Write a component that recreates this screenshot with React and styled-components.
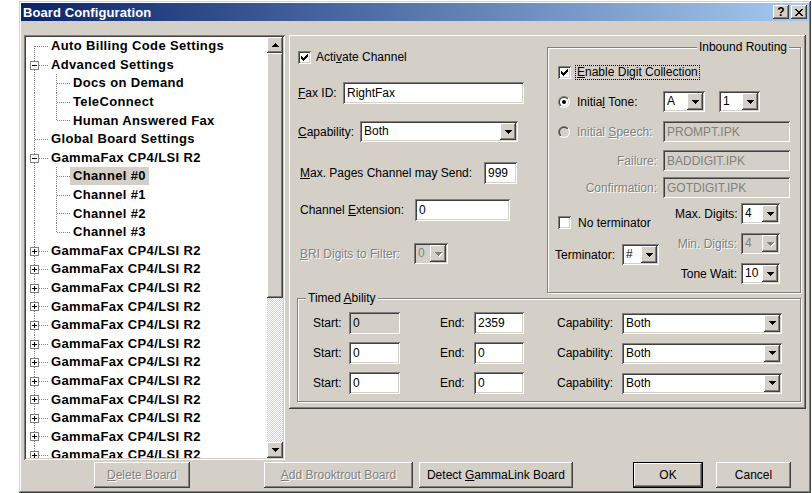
import React from "react";
import styled, { createGlobalStyle, css } from "styled-components";

const GlobalStyle = createGlobalStyle`
  body {
    margin: 0;
    background: #fff;
    font-family: "Liberation Sans", Arial, sans-serif;
    font-size: 12px;
    color: #000;
  }
`;

const sunken = css`
  box-shadow: inset 1px 1px #808080, inset -1px -1px #fff,
    inset 2px 2px #404040, inset -2px -2px #d4d0c8;
`;

const raised = css`
  box-shadow: inset -1px -1px #404040, inset 1px 1px #fff,
    inset -2px -2px #808080, inset 2px 2px #d4d0c8;
`;

const disabledText = css`
  color: #808080;
  text-shadow: 1px 1px 0 #fff;
`;

const TREE = [
  { label: "Auto Billing Code Settings", level: 0, first: true },
  { label: "Advanced Settings", level: 0, box: "minus" },
  { label: "Docs on Demand", level: 1 },
  { label: "TeleConnect", level: 1 },
  { label: "Human Answered Fax", level: 1, last: true },
  { label: "Global Board Settings", level: 0 },
  { label: "GammaFax CP4/LSI R2", level: 0, box: "minus" },
  { label: "Channel #0", level: 1, selected: true },
  { label: "Channel #1", level: 1 },
  { label: "Channel #2", level: 1 },
  { label: "Channel #3", level: 1, last: true },
  ...Array.from({ length: 12 }, () => ({
    label: "GammaFax CP4/LSI R2",
    level: 0,
    box: "plus",
  })),
];

function App() {
  return (
    <>
      <GlobalStyle />
      <Window>
        <TitleBar>
          <Title>Board Configuration</Title>
          <CaptionButtons>
            <CaptionButton>?</CaptionButton>
            <CaptionButton>
              <svg width="8" height="7" viewBox="0 0 8 7" shapeRendering="crispEdges">
                <path
                  d="M0 0h2v1h1v1h2v-1h1v-1h2v1h-1v1h-1v1h-1v1h1v1h1v1h1v1h-2v-1h-1v-1h-2v1h-1v1h-2v-1h1v-1h1v-1h1v-1h-1v-1h-1v-1h-1z"
                  fill="#000"
                />
              </svg>
            </CaptionButton>
          </CaptionButtons>
        </TitleBar>

        <Body>
          <MainRow>
            <TreeBox>
              <TreeList>
                {TREE.map((item, i) => (
                  <TreeRow key={i}>
                    {item.level > 0 && <Guide />}
                    <Joint $last={item.last} $first={item.first}>
                      {item.box && <Expander type={item.box} />}
                    </Joint>
                    <ItemLabel $selected={item.selected}>{item.label}</ItemLabel>
                  </TreeRow>
                ))}
              </TreeList>
              <ScrollBar>
                <ScrollButton>
                  <Arrow up />
                </ScrollButton>
                <Thumb />
                <Track />
                <ScrollButton>
                  <Arrow />
                </ScrollButton>
              </ScrollBar>
            </TreeBox>

            <Panel>
              <TopArea>
                <MainColumn>
                  <Row $mt={11} $h={14}>
                    <CheckBox checked />
                    <Label $ml={5}>
                      Acti<u>v</u>ate Channel
                    </Label>
                  </Row>
                  <Row $mt={18}>
                    <Label $w={45}>
                      <u>F</u>ax ID:
                    </Label>
                    <TextBox $w={181}>RightFax</TextBox>
                  </Row>
                  <Row $mt={17}>
                    <Label $w={62}>
                      <u>C</u>apability:
                    </Label>
                    <Select $w={158} value="Both" />
                  </Row>
                  <Row $mt={20}>
                    <Label $w={184} $ml={2}>
                      <u>M</u>ax. Pages Channel may Send:
                    </Label>
                    <TextBox $w={33}>999</TextBox>
                  </Row>
                  <Row $mt={15}>
                    <Label $w={115} $ml={2}>
                      Channel <u>E</u>xtension:
                    </Label>
                    <TextBox $w={95}>0</TextBox>
                  </Row>
                  <Row $mt={22}>
                    <Label $w={114} $ml={2} $disabled>
                      <u>B</u>RI Digits to Filter:
                    </Label>
                    <Select $w={34} value="0" disabled />
                  </Row>
                </MainColumn>

                <Group $h={246} $mt={8}>
                  <Legend $right>Inbound Routing</Legend>
                  <GroupBody $pt={17} $pl={10}>
                    <Row $h={14}>
                      <CheckBox checked />
                      <FocusText>
                        <u>E</u>nable Digit Collection
                      </FocusText>
                    </Row>
                    <Row $mt={12}>
                      <Lead>
                        <Radio checked id="tone" />
                        <Label $ml={7}>
                          Initia<u>l</u> Tone:
                        </Label>
                      </Lead>
                      <Select $w={42} value="A" />
                      <Select $w={41} $ml={14} value="1" />
                    </Row>
                    <Row $mt={9}>
                      <Lead>
                        <Radio disabled id="speech" />
                        <Label $ml={7} $disabled>
                          Initial <u>S</u>peech:
                        </Label>
                      </Lead>
                      <TextBox $w={127} $h={21} disabled>
                        PROMPT.IPK
                      </TextBox>
                    </Row>
                    <Row $mt={8}>
                      <Lead $right>
                        <Label $disabled>Failure:</Label>
                      </Lead>
                      <TextBox $w={127} $h={21} disabled>
                        BADDIGIT.IPK
                      </TextBox>
                    </Row>
                    <Row $mt={6}>
                      <Lead $right>
                        <Label $disabled>Confirmation:</Label>
                      </Lead>
                      <TextBox $w={127} $h={21} disabled>
                        GOTDIGIT.IPK
                      </TextBox>
                    </Row>
                    <DigitGrid>
                      <Stack>
                        <Row $mt={13} $h={13}>
                          <CheckBox />
                          <Label $ml={7}>No terminator</Label>
                        </Row>
                        <Row $mt={15}>
                          <Label $w={67} $ml={-3}>
                            Terminator:
                          </Label>
                          <Select $w={37} value="#" />
                        </Row>
                      </Stack>
                      <Stack>
                        <Row>
                          <Label $w={62} $right>
                            Max. Digits:
                          </Label>
                          <Select $w={39} $ml={4} value="4" />
                        </Row>
                        <Row $mt={9}>
                          <Label $w={62} $right $disabled>
                            Min. Digits:
                          </Label>
                          <Select $w={39} $ml={4} value="4" disabled />
                        </Row>
                        <Row $mt={9}>
                          <Label $w={62} $right>
                            Tone Wait:
                          </Label>
                          <Select $w={39} $ml={4} value="10" />
                        </Row>
                      </Stack>
                    </DigitGrid>
                  </GroupBody>
                </Group>
              </TopArea>

              <Group $h={104} $mt={5}>
                <Legend>
                  Timed <u>A</u>bility
                </Legend>
                <TimedGrid>
                  {[
                    ["0", "2359", true],
                    ["0", "0", false],
                    ["0", "0", false],
                  ].map(([start, end, locked], i) => (
                    <React.Fragment key={i}>
                      <Label>Start:</Label>
                      <TextBox $w={51} disabled={locked} $plain>
                        {start}
                      </TextBox>
                      <Label>End:</Label>
                      <TextBox $w={50}>{end}</TextBox>
                      <Label>Capability:</Label>
                      <Select $w={160} value="Both" />
                    </React.Fragment>
                  ))}
                </TimedGrid>
              </Group>
            </Panel>
          </MainRow>

          <ButtonBar>
            <Button $w={96} disabled>
              <u>D</u>elete Board
            </Button>
            <Button $w={149} $ml={74} disabled>
              <u>A</u>dd Brooktrout Board
            </Button>
            <Button $w={154} $ml={6}>
              Detect <u>G</u>ammaLink Board
            </Button>
            <Button $w={70} $ml={60} $default>
              OK
            </Button>
            <Button $w={75} $ml={13}>
              Cancel
            </Button>
          </ButtonBar>
        </Body>
      </Window>
    </>
  );
}

export default App;

function Arrow({ up, disabled }) {
  return (
    <ArrowSvg width="7" height="4" viewBox="0 0 7 4" shapeRendering="crispEdges" $up={up}>
      {disabled && (
        <path d="M1 1h7v1h-1v1h-1v1h-1v1h-1v-1h-1v-1h-1v-1h-1z" fill="#fff" />
      )}
      <path
        d="M0 0h7v1h-1v1h-1v1h-1v1h-1v-1h-1v-1h-1v-1h-1z"
        fill={disabled ? "#808080" : "#000"}
      />
    </ArrowSvg>
  );
}

function Expander({ type }) {
  return (
    <ExpanderBox>
      <svg width="9" height="9" viewBox="0 0 9 9" shapeRendering="crispEdges">
        <rect x="0.5" y="0.5" width="8" height="8" fill="#fff" stroke="#808080" />
        <path d="M2 4h5v1h-5z" fill="#000" />
        {type === "plus" && <path d="M4 2h1v5h-1z" fill="#000" />}
      </svg>
    </ExpanderBox>
  );
}

function CheckBox({ checked }) {
  return (
    <CheckFrame>
      {checked && (
        <svg width="7" height="7" viewBox="0 0 7 7" shapeRendering="crispEdges">
          <path
            d="M6 0h1v3h-1v1h-1v1h-1v1h-1v1h-1v-1h-1v-1h-1v-3h1v1h1v1h1v-1h1v-1h1v-1h1z"
            fill="#000"
          />
        </svg>
      )}
    </CheckFrame>
  );
}

function Radio({ checked, disabled, id }) {
  return (
    <RadioSvg width="12" height="12" viewBox="0 0 12 12">
      <defs>
        <linearGradient id={`${id}-o`} x1="0" y1="0" x2="1" y2="1">
          <stop offset="0.5" stopColor="#808080" />
          <stop offset="0.5" stopColor="#fff" />
        </linearGradient>
        <linearGradient id={`${id}-i`} x1="0" y1="0" x2="1" y2="1">
          <stop offset="0.5" stopColor="#404040" />
          <stop offset="0.5" stopColor="#d4d0c8" />
        </linearGradient>
      </defs>
      <circle cx="6" cy="6" r="6" fill={`url(#${id}-o)`} />
      <circle cx="6" cy="6" r="5" fill={`url(#${id}-i)`} />
      <circle cx="6" cy="6" r="4" fill={disabled ? "#d4d0c8" : "#fff"} />
      {checked && <circle cx="6" cy="6" r="2" fill="#000" />}
    </RadioSvg>
  );
}

function Select({ value, disabled, $w, $ml }) {
  return (
    <SelectBox $w={$w} $ml={$ml} $disabled={disabled}>
      <SelectText $disabled={disabled}>{value}</SelectText>
      <DropButton>
        <Arrow disabled={disabled} />
      </DropButton>
    </SelectBox>
  );
}

const Window = styled.div`
  box-sizing: border-box;
  margin: 1px 0 0 19px;
  width: 792px;
  height: 492px;
  padding: 2px;
  background: #d4d0c8;
  box-shadow: inset -1px -1px #404040, inset 1px 1px #d4d0c8,
    inset -2px -2px #808080, inset 2px 2px #fff;
  display: flex;
  flex-direction: column;
`;

const TitleBar = styled.div`
  height: 18px;
  display: flex;
  align-items: center;
  justify-content: space-between;
  padding: 0 2px 0 2px;
  background: linear-gradient(to right, #0a246a, #a6caf0);
`;

const Title = styled.span`
  color: #fff;
  font-weight: bold;
  font-size: 13px;
  letter-spacing: 0.1px;
`;

const CaptionButtons = styled.div`
  display: flex;
  gap: 2px;
`;

const CaptionButton = styled.span`
  width: 16px;
  height: 14px;
  display: flex;
  align-items: center;
  justify-content: center;
  background: #d4d0c8;
  font-weight: bold;
  font-size: 12px;
  ${raised}
`;

const Body = styled.div`
  flex: 1;
  padding: 14px 3px 0 3px;
  display: flex;
  flex-direction: column;
`;

const MainRow = styled.div`
  display: flex;
  align-items: flex-start;
  gap: 4px;
  height: 425px;
`;

const TreeBox = styled.div`
  box-sizing: border-box;
  width: 261px;
  height: 425px;
  padding: 2px;
  background: #fff;
  display: flex;
  ${sunken}
`;

const TreeList = styled.div`
  flex: 1;
  overflow: hidden;
`;

const TreeRow = styled.div`
  display: flex;
  align-items: center;
  height: 18.6px;
`;

const dotsV = "repeating-linear-gradient(to bottom, #808080 0 1px, transparent 1px 2px)";
const dotsH = "repeating-linear-gradient(to right, #808080 0 1px, transparent 1px 2px)";

const Guide = styled.span`
  flex-shrink: 0;
  width: 22px;
  height: 100%;
  background: ${dotsV} 8px 0 / 1px 100% no-repeat;
`;

const Joint = styled.span`
  flex-shrink: 0;
  position: relative;
  width: 22px;
  height: 100%;
  background: ${dotsH} 9px 9px / 13px 1px no-repeat,
    ${dotsV} 8px ${(p) => (p.$first ? "9px" : "0")} /
      1px ${(p) => (p.$last ? "10px" : p.$first ? "10px" : "100%")} no-repeat;
`;

const ExpanderBox = styled.span`
  position: absolute;
  left: 4px;
  top: 5px;
  display: flex;
`;

const ItemLabel = styled.span`
  padding: 1px 3px;
  font-weight: bold;
  font-size: 13px;
  letter-spacing: 0.35px;
  line-height: 16px;
  white-space: nowrap;
  background: ${(p) => (p.$selected ? "#d4d0c8" : "transparent")};
`;

const ScrollBar = styled.div`
  width: 16px;
  display: flex;
  flex-direction: column;
`;

const ScrollButton = styled.div`
  height: 16px;
  display: flex;
  align-items: center;
  justify-content: center;
  background: #d4d0c8;
  ${raised}
`;

const Thumb = styled.div`
  height: 245px;
  background: #d4d0c8;
  ${raised}
`;

const Track = styled.div`
  flex: 1;
  background: repeating-conic-gradient(#fff 0 25%, #d4d0c8 0 50%) 0 0 / 2px 2px;
`;

const ArrowSvg = styled.svg`
  display: block;
  overflow: visible;
  transform: ${(p) => (p.$up ? "rotate(180deg)" : "none")};
`;

const Panel = styled.div`
  box-sizing: border-box;
  flex: 1;
  height: 374px;
  padding: 4px 5px 0 8px;
  ${raised}
`;

const TopArea = styled.div`
  display: grid;
  grid-template-columns: 250px 254px;
  align-items: start;
`;

const MainColumn = styled.div`
  display: flex;
  flex-direction: column;
  padding-left: 1px;
`;

const Row = styled.div`
  display: flex;
  align-items: center;
  margin-top: ${(p) => p.$mt || 0}px;
  ${(p) => p.$h && `height: ${p.$h}px;`}
`;

const Label = styled.span`
  flex-shrink: 0;
  white-space: nowrap;
  margin-left: ${(p) => p.$ml || 0}px;
  ${(p) => p.$w && `width: ${p.$w}px;`}
  text-align: ${(p) => (p.$right ? "right" : "left")};
  ${(p) => p.$disabled && disabledText}
`;

const FocusText = styled.span`
  margin-left: 5px;
  padding: 0 1px;
  line-height: 13px;
  outline: 1px dotted #000;
`;

const Lead = styled.span`
  display: flex;
  align-items: center;
  justify-content: ${(p) => (p.$right ? "flex-end" : "flex-start")};
  width: 105px;
  padding-right: ${(p) => (p.$right ? 6 : 0)}px;
  box-sizing: border-box;
  flex-shrink: 0;
`;

const TextBox = styled.div`
  box-sizing: border-box;
  width: ${(p) => p.$w}px;
  height: ${(p) => p.$h || 22}px;
  padding: 3px 0 0 4px;
  line-height: 16px;
  white-space: nowrap;
  background: ${(p) => (p.disabled ? "#d4d0c8" : "#fff")};
  color: ${(p) => (p.disabled && !p.$plain ? "#808080" : "#000")};
  ${sunken}
`;

const SelectBox = styled.div`
  box-sizing: border-box;
  display: flex;
  width: ${(p) => p.$w}px;
  height: 21px;
  margin-left: ${(p) => p.$ml || 0}px;
  padding: 2px;
  background: ${(p) => (p.$disabled ? "#d4d0c8" : "#fff")};
  ${sunken}
`;

const SelectText = styled.span`
  flex: 1;
  padding-left: 2px;
  line-height: 17px;
  white-space: nowrap;
  overflow: hidden;
  color: ${(p) => (p.$disabled ? "#808080" : "#000")};
`;

const DropButton = styled.span`
  width: 16px;
  height: 17px;
  display: flex;
  align-items: center;
  justify-content: center;
  background: #d4d0c8;
  ${raised}
`;

const CheckFrame = styled.span`
  box-sizing: border-box;
  flex-shrink: 0;
  width: 13px;
  height: 13px;
  display: flex;
  align-items: center;
  justify-content: center;
  background: #fff;
  ${sunken}
`;

const RadioSvg = styled.svg`
  flex-shrink: 0;
  display: block;
`;

const Group = styled.div`
  position: relative;
  box-sizing: border-box;
  height: ${(p) => p.$h}px;
  margin-top: ${(p) => p.$mt || 0}px;
  border: 1px solid #808080;
  box-shadow: inset 1px 1px #fff, 1px 1px #fff;
`;

const Legend = styled.span`
  position: absolute;
  top: -8px;
  ${(p) => (p.$right ? "right: 11px;" : "left: 8px;")}
  padding: 0 2px;
  line-height: 14px;
  background: #d4d0c8;
`;

const GroupBody = styled.div`
  display: flex;
  flex-direction: column;
  padding: ${(p) => p.$pt}px 0 0 ${(p) => p.$pl}px;
`;

const DigitGrid = styled.div`
  display: grid;
  grid-template-columns: 117px auto;
  margin-top: 5px;
`;

const Stack = styled.div`
  display: flex;
  flex-direction: column;
`;

const TimedGrid = styled.div`
  display: grid;
  grid-template-columns: 36px 91px 34px 83px 65px 160px;
  grid-auto-rows: 22px;
  row-gap: 8px;
  align-items: center;
  padding: 13px 0 0 15px;
`;

const ButtonBar = styled.div`
  display: flex;
  margin-top: 2px;
  height: 26px;
  padding-left: 70px;
`;

const Button = styled.button`
  box-sizing: border-box;
  width: ${(p) => p.$w}px;
  height: 26px;
  margin-left: ${(p) => p.$ml || 0}px;
  padding: 0;
  border: ${(p) => (p.$default ? "1px solid #000" : "none")};
  background: #d4d0c8;
  font-family: "Liberation Sans", Arial, sans-serif;
  font-size: 12px;
  color: #000;
  ${raised}
  ${(p) => p.disabled && disabledText}
`;
